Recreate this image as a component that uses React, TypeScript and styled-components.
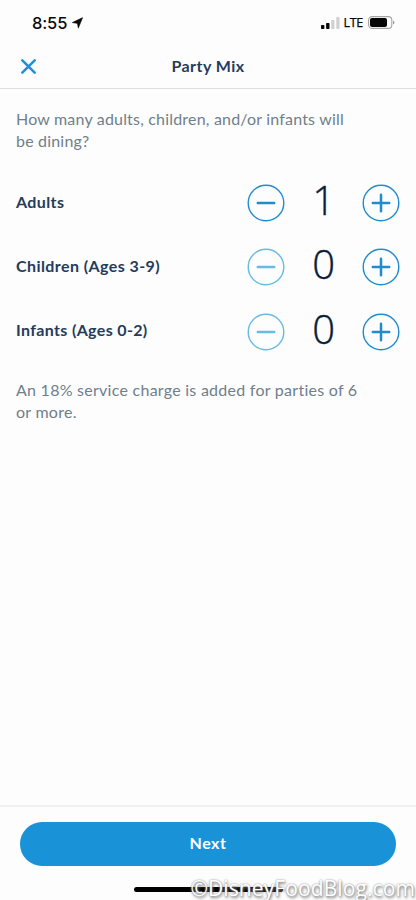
import React, { useState } from "react";
import styled, { createGlobalStyle } from "styled-components";

const GlobalStyle = createGlobalStyle`
  * { box-sizing: border-box; }
  body { margin: 0; background: #fdfdfd; }
`;

const Screen = styled.div`
  display: flex;
  flex-direction: column;
  width: 416px;
  height: 900px;
  overflow: hidden;
  background: #fdfdfd;
  font-family: Lato, "Open Sans", sans-serif;
  color: #253b5b;
`;

const StatusBar = styled.div`
  display: flex;
  align-items: center;
  justify-content: space-between;
  height: 45px;
  padding: 0 21px 0 32px;
  color: #080808;
  font-family: Inter, sans-serif;
`;

const StatusGroup = styled.div`
  display: flex;
  align-items: center;
`;

const Time = styled.span`
  font-size: 16.5px;
  font-weight: 500;
  letter-spacing: -0.15px;
  margin-right: 5px;
`;

const Network = styled.span`
  font-size: 12.5px;
  letter-spacing: -0.3px;
  margin: 0 5px 0 4px;
  font-family: "Open Sans", sans-serif;
  font-weight: 500;
  -webkit-text-stroke: 0.25px #080808;
`;

const Header = styled.header`
  display: grid;
  grid-template-columns: 40px 1fr 40px;
  align-items: center;
  height: 44px;
  padding: 0 16px 2px;
  border-bottom: 1px solid #dedfe1;
`;

const CloseButton = styled.button`
  display: flex;
  padding: 1px 0 0 4px;
  border: 0;
  background: none;
`;

const Title = styled.h1`
  margin: 0;
  font-size: 16px;
  font-weight: 700;
  letter-spacing: 0.45px;
  text-align: center;
  line-height: 20px;
`;

const Content = styled.main`
  flex: 1;
  padding: 19px 16px 0;
`;

const Copy = styled.p<{ $spacing: number }>`
  margin: 0;
  font-size: 16px;
  line-height: 22px;
  letter-spacing: ${(p) => p.$spacing}px;
  color: #6f7f8c;
  white-space: nowrap;
`;

const Rows = styled.div`
  padding: 18px 0 16px;
`;

const Row = styled.div`
  display: flex;
  align-items: center;
  height: 64.3px;
`;

const Label = styled.span<{ $spacing: number }>`
  flex: 1;
  font-size: 16px;
  font-weight: 700;
  letter-spacing: ${(p) => p.$spacing}px;
  line-height: 20px;
  padding-bottom: 1px;
`;

const Stepper = styled.div`
  display: grid;
  grid-template-columns: 38px 76.6px 38px;
  align-items: center;
`;

const StepButton = styled.button<{ $dim?: boolean }>`
  display: flex;
  padding: 2px 0 0;
  border: 0;
  background: none;
  color: ${(p) => (p.$dim ? "#67bbe5" : "#218bd0")};
`;

const Count = styled.span`
  font-family: "Open Sans", sans-serif;
  font-weight: 300;
  font-size: 40px;
  line-height: 46px;
  padding-bottom: 4px;
  text-align: center;
  color: #0b1c38;
  -webkit-text-stroke: 0.4px #0b1c38;
`;

const Footer = styled.footer`
  position: relative;
  height: 95px;
  padding: 15px 20px 0;
  border-top: 2px solid #eef1f2;
`;

const NextButton = styled.button`
  display: block;
  width: 100%;
  height: 44px;
  padding: 0 0 3px;
  border: 0;
  border-radius: 22px;
  background: #1992d8;
  color: #fff;
  font: 700 16px Lato, sans-serif;
  letter-spacing: 0.5px;
`;

const HomeIndicator = styled.div`
  width: 149px;
  height: 5px;
  margin: 21px auto 0;
  border-radius: 3px;
  background: #000;
`;

const Watermark = styled.span`
  position: absolute;
  right: 1px;
  bottom: -2px;
  font: 400 21px/28px "Open Sans", sans-serif;
  letter-spacing: 0.1px;
  color: #fff;
  white-space: nowrap;
  text-shadow: 0 0 2px #888, 1px 2px 3px #777;
`;

function StepIcon({ plus }: { plus?: boolean }) {
  return (
    <svg width="38" height="38" viewBox="0 0 38 38" fill="none" stroke="currentColor">
      <circle cx="19" cy="19" r="17.8" strokeWidth="1.4" />
      <path d={plus ? "M10.8 19h16.4M19 10.8v16.4" : "M10.8 19h16.4"} strokeWidth="2.5" strokeLinecap="round" />
    </svg>
  );
}

const guests = [
  { name: "Adults", min: 1, spacing: 0.4 },
  { name: "Children (Ages 3-9)", min: 0, spacing: 0.42 },
  { name: "Infants (Ages 0-2)", min: 0, spacing: 0.35 },
];

export default function App() {
  const [counts, setCounts] = useState([1, 0, 0]);
  const step = (index: number, by: number) =>
    setCounts(counts.map((c, i) => (i === index ? Math.max(guests[i].min, c + by) : c)));

  return (
    <>
      <GlobalStyle />
      <Screen>
        <StatusBar>
          <StatusGroup>
            <Time>8:55</Time>
            <svg width="11" height="12" viewBox="0 0 11 12">
              <path d="M10.7.6 6.3 11.2 5.4 6.4.2 5.6Z" fill="#080808" stroke="#080808" strokeWidth=".5" strokeLinejoin="round" />
            </svg>
          </StatusGroup>
          <StatusGroup>
            <svg width="19" height="12" viewBox="0 0 19 12">
              <rect x="0" y="8" width="3.4" height="4" rx=".8" fill="#080808" />
              <rect x="5.1" y="6" width="3.4" height="6" rx=".8" fill="#080808" />
              <rect x="10.2" y="3" width="3.2" height="9" rx=".8" fill="#d0d0d0" />
              <rect x="15.3" y="0" width="3.2" height="12" rx=".8" fill="#d0d0d0" />
            </svg>
            <Network>LTE</Network>
            <svg width="27" height="13" viewBox="0 0 27 13">
              <rect x=".6" y=".6" width="23.2" height="11.8" rx="3.5" fill="none" stroke="#a5a5a5" strokeWidth="1.1" />
              <rect x="2" y="2.1" width="17" height="8.8" rx="2" fill="#050505" />
              <path d="M25 4.4q1.4.7 1.4 2.1T25 8.6Z" fill="#999" />
            </svg>
          </StatusGroup>
        </StatusBar>
        <Header>
          <CloseButton aria-label="Close">
            <svg width="17" height="17" viewBox="0 0 17 17" fill="none" stroke="#1992d8" strokeWidth="2.5" strokeLinecap="round">
              <path d="M2.3 2.3 14.7 14.7M14.7 2.3 2.3 14.7" />
            </svg>
          </CloseButton>
          <Title>Party Mix</Title>
        </Header>
        <Content>
          <Copy $spacing={0.19}>
            How many adults, children, and/or infants will
            <br />
            be dining?
          </Copy>
          <Rows>
            {guests.map((guest, i) => (
              <Row key={guest.name}>
                <Label $spacing={guest.spacing}>{guest.name}</Label>
                <Stepper>
                  <StepButton $dim={counts[i] === 0} aria-label="Remove" onClick={() => step(i, -1)}>
                    <StepIcon />
                  </StepButton>
                  <Count>{counts[i]}</Count>
                  <StepButton aria-label="Add" onClick={() => step(i, 1)}>
                    <StepIcon plus />
                  </StepButton>
                </Stepper>
              </Row>
            ))}
          </Rows>
          <Copy $spacing={0.26}>
            An 18% service charge is added for parties of 6
            <br />
            or more.
          </Copy>
        </Content>
        <Footer>
          <NextButton>Next</NextButton>
          <HomeIndicator />
          <Watermark>©DisneyFoodBlog.com</Watermark>
        </Footer>
      </Screen>
    </>
  );
}
